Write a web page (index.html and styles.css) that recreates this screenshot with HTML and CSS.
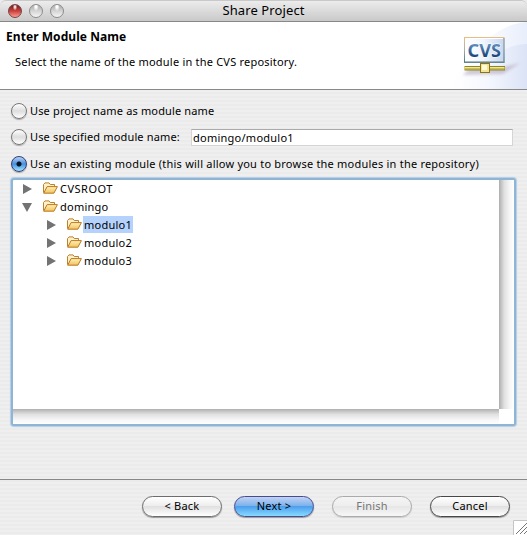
FILE: index.html
```html
<!DOCTYPE html>
<html lang="en">
<head>
<meta charset="utf-8">
<title>Share Project</title>
<link rel="stylesheet" href="styles.css">
</head>
<body>
<svg class="defs" width="0" height="0" aria-hidden="true">
  <defs>
    <linearGradient id="gold" x1="0" y1="0" x2="0" y2="1"><stop offset="0" stop-color="#fff0b8"/><stop offset="1" stop-color="#f3c25b"/></linearGradient>
    <symbol id="folder" viewBox="0 0 15 12">
      <path d="M.5 10.5V2.5L2 .9h4l1.3 1.6h4.2v2.2" fill="#fff1c5" stroke="#ba8130"/>
      <path d="M.7 11.2 4.1 4.6h10.3l-3.5 6.6z" fill="url(#gold)" stroke="#b97924"/>
    </symbol>
  </defs>
</svg>
<div class="window">
  <header class="titlebar">
    <div class="lights"><i class="light close"></i><i class="light"></i><i class="light"></i></div>
    <h1>Share Project</h1>
  </header>
  <section class="banner">
    <div class="banner-text">
      <h2>Enter Module Name</h2>
      <p>Select the name of the module in the CVS repository.</p>
    </div>
    <svg class="banner-art" width="127" height="67" viewBox="400 22 127 67">
      <defs>
        <linearGradient id="fade" x1="0" x2="1"><stop offset="0" stop-color="#fff"/><stop offset=".45" stop-color="#f4f7fd"/><stop offset="1" stop-color="#dbe3f6"/></linearGradient>
        <linearGradient id="arc" x1="0" x2="1"><stop offset="0" stop-color="#fff"/><stop offset=".5" stop-color="#fafbff"/><stop offset="1" stop-color="#e8eefb"/></linearGradient>
        <linearGradient id="screen" x1="0" x2="1"><stop offset="0" stop-color="#fff"/><stop offset=".5" stop-color="#eff4fd"/><stop offset="1" stop-color="#c7d6ef"/></linearGradient>
        <linearGradient id="rim" x1="0" y1="0" x2="0" y2="1"><stop offset="0" stop-color="#e7bd83"/><stop offset=".5" stop-color="#a9b0aa"/><stop offset="1" stop-color="#4f777d"/></linearGradient>
        <linearGradient id="letters" x1="0" y1="0" x2="0" y2="1"><stop offset=".2" stop-color="#6d98c6"/><stop offset=".8" stop-color="#174478"/></linearGradient>
        <filter id="soft" x="-20%" y="-80%" width="140%" height="260%"><feGaussianBlur stdDeviation="1.6"/></filter>
      </defs>
      <path d="M448 89C466 57 494 24 527 22V89z" fill="url(#arc)"/>
      <path d="M455 89C473 70 500 44 527 44V89z" fill="url(#fade)"/>
      <path d="M463 75 470 68H500L520 63 503 74z" fill="#b5a8bf" opacity=".6" filter="url(#soft)"/>
      <rect x="464.5" y="37.5" width="39.5" height="24.5" fill="url(#screen)" stroke="url(#rim)"/>
      <path d="M465.5 61V38.5H503" fill="none" stroke="#fff"/>
      <path d="M464 62.5H504.5" stroke="#67858a"/>
      <path d="M504 38V62" stroke="#7c9ba9"/>
      <text class="logo" x="467.5" y="56.5" textLength="33.5" lengthAdjust="spacingAndGlyphs">CVS</text>
      <path d="M464.5 66h40.500v4.500h-40.500z" fill="#8d8527"/><path d="M464.500 67h40v1.500h-40z" fill="#efe88c"/><path d="M464.500 69h40" stroke="#d5c865"/>
      <path d="M484.500 63V65" stroke="#777226" stroke-width="2"/>
      <rect x="480.500" y="63.500" width="9" height="9" fill="#f4e297" stroke="#8a7419"/>
      <path d="M482 65h5v5h-5z" fill="#fffbd4"/>
    </svg>
  </section>
  <main>
    <div class="option first"><i class="radio"></i><span class="t1">Use project name as module name</span></div>
    <div class="option second"><i class="radio"></i><span class="t2">Use specified module name:</span><div class="field"><span>domingo/modulo1</span></div></div>
    <div class="option third"><i class="radio on"></i><span class="t3">Use an existing module (this will allow you to browse the modules in the repository)</span></div>
    <div class="tree">
      <ul>
        <li><i class="right"></i><svg><use href="#folder"/></svg><span class="root">CVSROOT</span></li>
        <li><i class="down"></i><svg><use href="#folder"/></svg><span>domingo</span></li>
        <li class="child"><i class="right"></i><svg><use href="#folder"/></svg><span class="selected">modulo1</span></li>
        <li class="child"><i class="right"></i><svg><use href="#folder"/></svg><span>modulo2</span></li>
        <li class="child"><i class="right"></i><svg><use href="#folder"/></svg><span>modulo3</span></li>
      </ul>
      <div class="vbar"></div>
      <div class="hbar"></div>
      <div class="corner"></div>
    </div>
  </main>
  <footer>
    <div class="button">&lt; Back</div>
    <div class="button default">Next &gt;</div>
    <div class="button disabled">Finish</div>
    <div class="button cancel">Cancel</div>
    <svg class="grip" width="14" height="15" viewBox="0 0 14 15"><path d="M0 0h14v15H0z" fill="#fff"/><path d="M.5 15V.5H14" fill="none" stroke="#c5c5c5"/><path d="M3 14 14 3M7 14l7-7M11 14l3-3" stroke="#777"/></svg>
  </footer>
</div>
</body>
</html>
```
FILE: styles.css
```css
* { box-sizing: border-box; }
body {
  margin: 0;
  color: #000;
  font: 11px/18px "Noto Sans", "Open Sans", sans-serif;
  letter-spacing: .21px;
  white-space: nowrap;
}
.defs { position: absolute; }
h1, h2, p, ul { margin: 0; padding: 0; }
.window {
  width: 527px;
  height: 535px;
  display: flex;
  flex-direction: column;
  overflow: hidden;
  background: repeating-linear-gradient(#ebebeb 0 2px, #efefef 2px 4px);
}
.titlebar {
  height: 22px;
  flex: none;
  display: grid;
  grid-template-columns: 80px 1fr 80px;
  border-bottom: 1px solid #888;
  border-top: 1px solid #c9c9c9;
  border-radius: 6px 6px 0 0;
  background: linear-gradient(#ececec, #c9c9c9);
}
.lights { display: flex; align-items: center; gap: 7px; padding-left: 8px; }
.light {
  width: 14px;
  height: 14px;
  border: 1px solid #8b8b8b;
  border-radius: 50%;
  background: radial-gradient(ellipse at 50% 12%, #fff 0 10%, transparent 32%), linear-gradient(#aaa, #d4d4d4 50%, #f5f5f5);
}
.close {
  border-color: #744347;
  background: radial-gradient(ellipse at 50% 16%, #f6d5d3 0 8%, transparent 26%), linear-gradient(#6a1f20, #cb403c 50%, #ff9a90);
}
h1 { font-size: 13px; line-height: 19px; font-weight: 400; text-align: center; letter-spacing: .1px; }
.banner {
  height: 68px;
  flex: none;
  display: flex;
  justify-content: space-between;
  background: #fff;
  border-bottom: 1px solid #888;
}
.banner-text { padding: 6px 0 0 6px; }
h2 { font-size: 12px; line-height: 18px; letter-spacing: .06px; }
.banner p { margin: 7px 0 0 9px; }
.logo { font: bold 18px "Noto Sans", sans-serif; letter-spacing: 0; fill: url(#letters); stroke: #fff; stroke-width: 1px; paint-order: stroke; }
main { flex: none; height: 389px; padding: 12px 11px 0; }
.option { display: flex; align-items: center; height: 18px; }
.second { margin-top: 8px; }
.third { margin-top: 9px; }
.radio {
  width: 16px;
  height: 16px;
  margin-right: 3px;
  border: 1px solid #777;
  border-radius: 50%;
  background: linear-gradient(#fff, #ddd 50%, #fff);
  box-shadow: 0 1px 1px #aaa;
}
.radio.on {
  border-color: #343c79;
  background: radial-gradient(circle, #061326 0 2px, transparent 3px), linear-gradient(#b9d2f4, #468fdc 50%, #9fe6ff);
}
.t1, .t2 { letter-spacing: .15px; }
.t2 { width: 161px; }
.t3 { letter-spacing: .22px; }
.field {
  width: 322px;
  height: 17px;
  line-height: 15px;
  padding-left: 1px;
  background: #fff;
  border: 1px solid #d5d5d5;
  border-top-color: #aaa;
  letter-spacing: .25px;
}
.tree {
  width: 505px;
  height: 248px;
  margin-top: 5px;
  display: grid;
  grid-template: 1fr 15px / 1fr 15px;
  background: #fff;
  border: 2px solid #8eb5d6;
  border-radius: 3px;
  box-shadow: 0 0 1px 1px #b4cee4;
}
.tree ul { padding: 0 0 0 9px; list-style: none; }
li { height: 18px; display: flex; align-items: center; }
li.child { padding-left: 24px; }
li i { width: 10px; height: 10px; margin-right: 11px; background: #737373; }
.right { clip-path: polygon(1px 0, 10px 5px, 1px 10px); }
.down { clip-path: polygon(0 1px, 10px 1px, 5px 10px); }
li svg { width: 15px; height: 12px; margin: 0 1px 2px 0; }
li span { height: 17px; margin-bottom: 1px; line-height: 18px; padding: 0 1px; letter-spacing: .25px; }
.selected { background: #b4d2fc; }
.root { letter-spacing: .5px; }
.vbar { background: linear-gradient(90deg, #aeaeae, #e0e0e0 35%, #f5f5f5 70%, #fff); }
.hbar { background: linear-gradient(#aeb0b0, #e0e0e0 35%, #f5f5f5 70%, #fff); }
.corner { background: #fff; }
footer {
  flex: 1;
  position: relative;
  display: flex;
  align-items: flex-start;
  padding: 16px 0 0 142px;
  border-top: 1px solid #888;
}
.button {
  width: 80px;
  height: 21px;
  margin-right: 12px;
  border: 1px solid #6d6d6d;
  border-radius: 11px;
  text-align: center;
  line-height: 18px;
  background: linear-gradient(#fff, #eee 45%, #dfdfdf 48%, #fff);
  box-shadow: 0 1px 1px #999;
}
.default {
  margin-right: 18px;
  border-color: #494b91;
  background: linear-gradient(#c2d3f3, #7db2ed 45%, #4b9ced 48%, #85dbff);
}
.disabled { color: #777; border-color: #aaa; background: linear-gradient(#f5f5f5, #eee 45%, #e6e6e6 48%, #f7f7f7); box-shadow: 0 1px 1px #ccc; margin-right: 18px; }
.cancel { border-color: #484848; }
.grip { position: absolute; right: 0; bottom: 0; }
```
